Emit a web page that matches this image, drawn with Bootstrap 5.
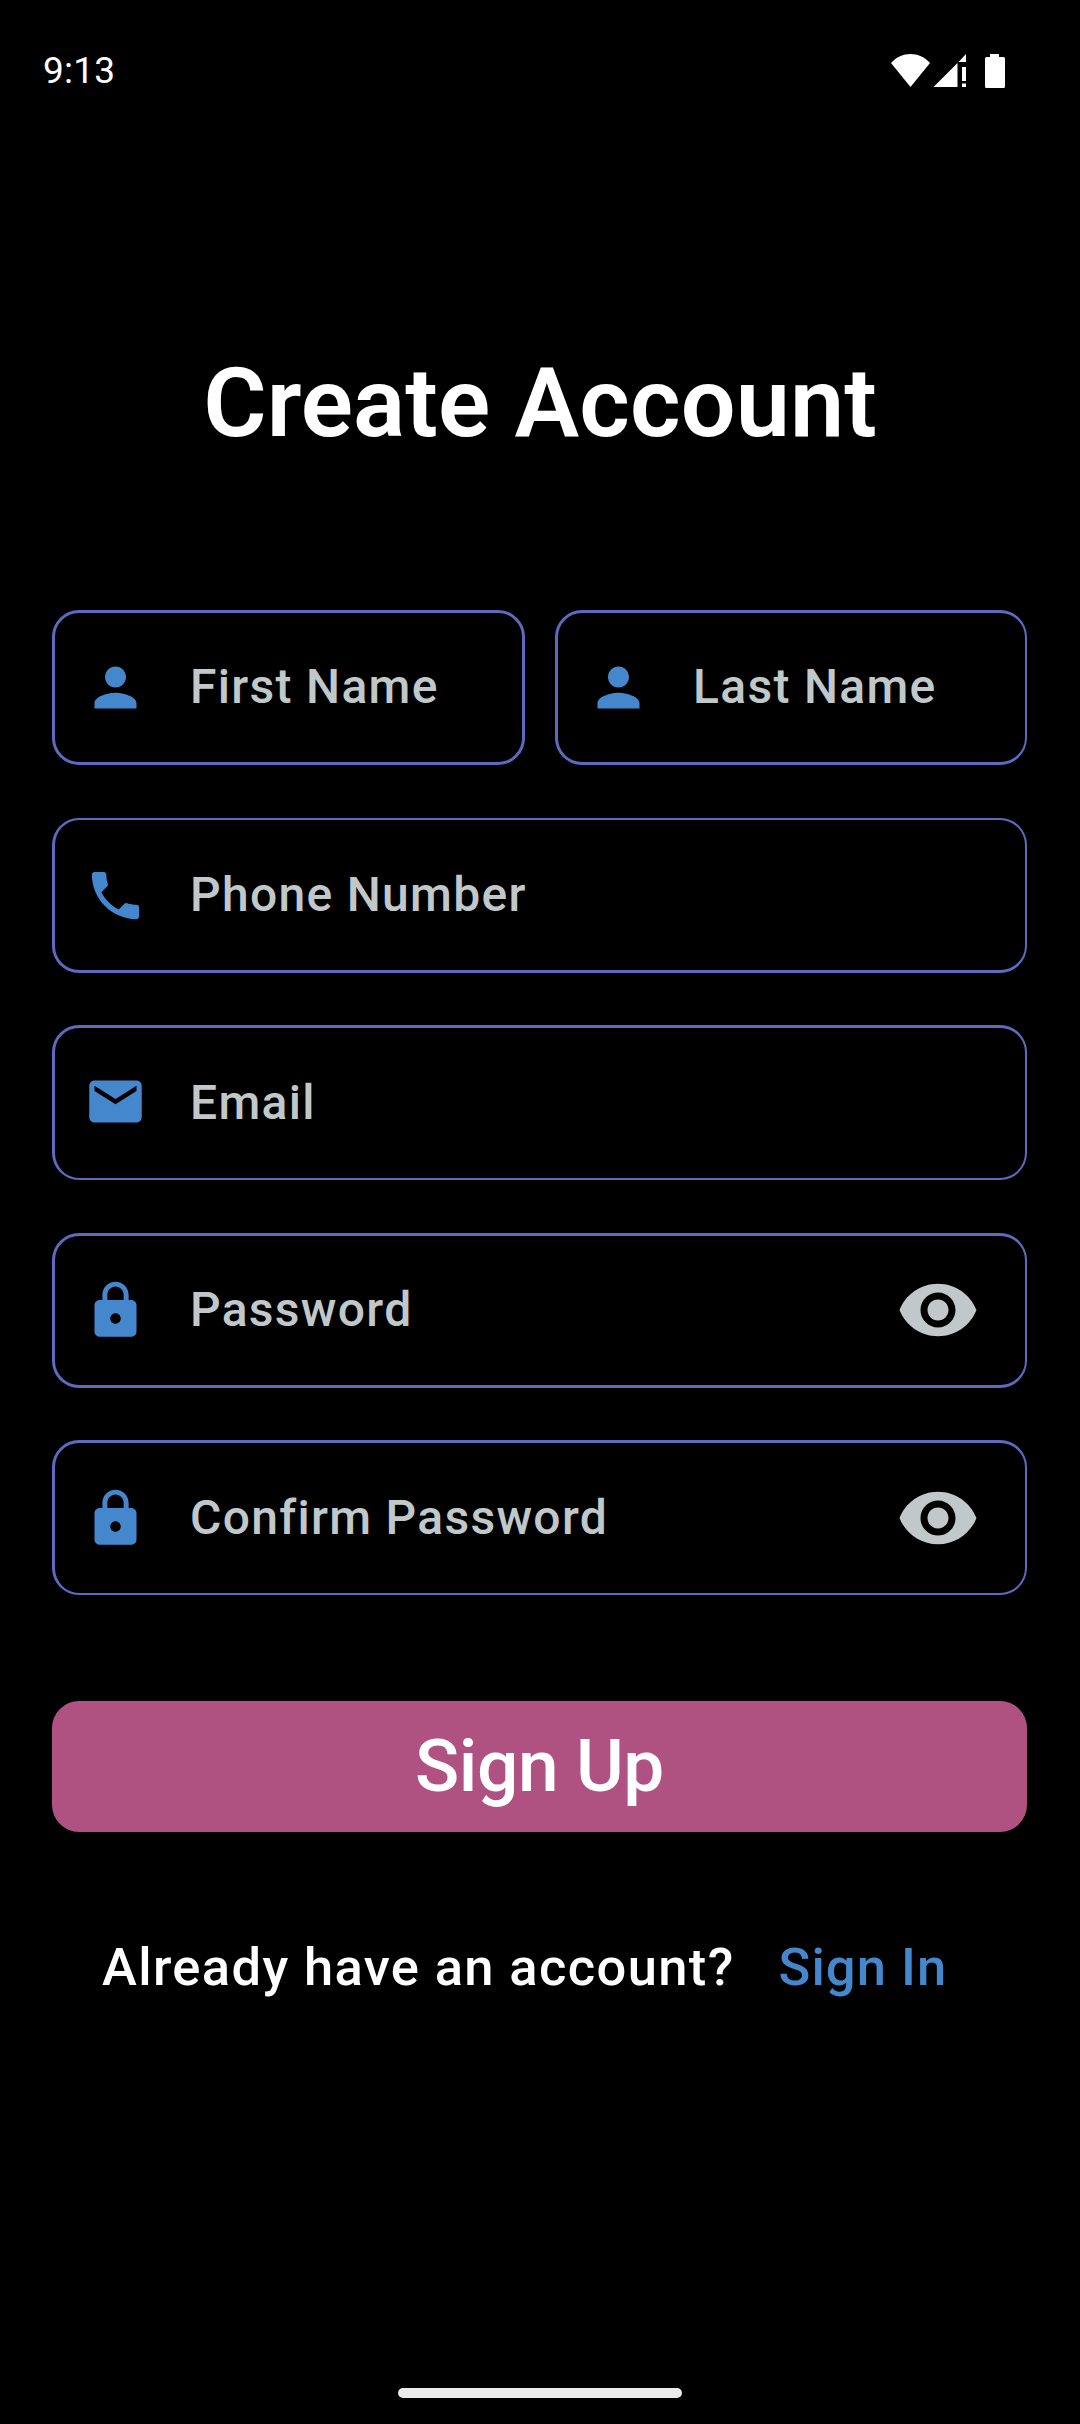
<!DOCTYPE html>
<html lang="en">
<head>
<meta charset="utf-8">
<meta name="viewport" content="width=device-width, initial-scale=1">
<title>Create Account</title>
<link href="https://cdn.jsdelivr.net/npm/bootstrap@5.3.0/dist/css/bootstrap.min.css" rel="stylesheet">
<style>
  body { background: #000; font-family: Roboto, "Liberation Sans", sans-serif; font-weight: 500; letter-spacing: 1.3px; }
  .screen { width: 1080px; height: 2424px; }
  .status-bar { height: 141px; padding: 0 75px 0 43px; font-size: 37px; font-weight: 400; letter-spacing: .2px; }
  .title-text { font-size: 97px; line-height: 110px; margin: 207px 0 152px; font-weight: 600; letter-spacing: .1px; }
  .form-area { padding: 0 53px 0 52px; }
  .stack { gap: 52px; }
  .name-row { gap: 30px; }
  .name-row, .gap-after { margin-bottom: 1px; }
  .raised span { padding-bottom: 2px; }
  .first-col { width: 473px; }
  .field { height: 155px; border: 3px solid #5c6bc0; border-radius: 27px; padding-left: 29px; color: #c0c8ca; font-size: 48px; line-height: 56px; }
  .field.wide { border-right-width: 2px; }
  .thin-top { border-top-width: 2px; }
  .thin-bottom { border-bottom-width: 2px; }
  .lead-icon { width: 63px; height: 63px; margin-right: 43px; fill: #4587cc; }
  .eye { width: 84px; height: 84px; margin-right: 45px; fill: #c0c8ca; }
  .raised .eye { margin-bottom: 1px; }
  .btn-signup, .btn-signup:hover { height: 131px; margin-top: 106px; padding: 0 0 1px; background: #af5282; color: #fff; border: 0; border-radius: 27px; font-size: 73px; font-weight: 500; line-height: 84px; letter-spacing: -.4px; }
  .signin-row { margin-top: 104px; padding-left: 102px; font-size: 52.5px; line-height: 62px; letter-spacing: 1.36px; }
  .signin-link { color: #4587cc; margin-left: 44px; letter-spacing: 1.05px; }
  .home-bar { width: 284px; height: 10px; margin-bottom: 26px; border-radius: 5px; background: #ebebeb; }
</style>
</head>
<body>
<svg class="d-none" xmlns="http://www.w3.org/2000/svg">
  <symbol id="person" viewBox="0 0 24 24"><path d="M12 12c2.21 0 4-1.79 4-4s-1.79-4-4-4-4 1.79-4 4 1.79 4 4 4zm0 2c-2.67 0-8 1.34-8 4v2h16v-2c0-2.66-5.33-4-8-4z"/></symbol>
  <symbol id="phone" viewBox="0 0 24 24"><path d="M6.62 10.79c1.44 2.83 3.76 5.14 6.59 6.59l2.2-2.2c.27-.27.67-.36 1.02-.24 1.12.37 2.33.57 3.57.57.55 0 1 .45 1 1V20c0 .55-.45 1-1 1-9.39 0-17-7.61-17-17 0-.55.45-1 1-1h3.5c.55 0 1 .45 1 1 0 1.25.2 2.45.57 3.57.11.35.03.74-.25 1.02l-2.2 2.2z"/></symbol>
  <symbol id="mail" viewBox="0 0 24 24"><path d="M20 4H4c-1.1 0-1.99.9-1.99 2L2 18c0 1.1.9 2 2 2h16c1.1 0 2-.9 2-2V6c0-1.1-.9-2-2-2zm0 4l-8 5-8-5V6l8 5 8-5v2z"/></symbol>
  <symbol id="lock" viewBox="0 0 24 24"><path d="M18 8h-1V6c0-2.76-2.24-5-5-5S7 3.24 7 6v2H6c-1.1 0-2 .9-2 2v10c0 1.1.9 2 2 2h12c1.1 0 2-.9 2-2V10c0-1.1-.9-2-2-2zm-6 9c-1.1 0-2-.9-2-2s.9-2 2-2 2 .9 2 2-.9 2-2 2zm3.1-9H8.9V6c0-1.71 1.39-3.1 3.1-3.1s3.1 1.39 3.1 3.1v2z"/></symbol>
  <symbol id="eye" viewBox="0 0 24 24"><path d="M12 4.5C7 4.5 2.73 7.61 1 12c1.73 4.39 6 7.5 11 7.5s9.27-3.11 11-7.5c-1.73-4.39-6-7.5-11-7.5zM12 17c-2.76 0-5-2.24-5-5s2.24-5 5-5 5 2.24 5 5-2.24 5-5 5zm0-8c-1.66 0-3 1.34-3 3s1.34 3 3 3 3-1.34 3-3-1.34-3-3-3z"/></symbol>
</svg>
<main class="screen d-flex flex-column text-white overflow-hidden">
  <header class="status-bar d-flex align-items-center justify-content-between">
    <span>9:13</span>
    <svg width="114" height="34" viewBox="0 0 114 34" fill="#fff">
      <path d="M0 9C10.5-3 28.5-3 39 9L19.500 33z"/>
      <path d="M42.5 33L66.5 9v24zM67.5 8L75 0v8zM71 13h4v14h-4zM71 29.500h4V33h-4z"/>
      <path d="M99 0h9v3h4.500a1.500 1.500 0 0 1 1.500 1.500v28a1.500 1.500 0 0 1-1.500 1.500h-17a1.500 1.500 0 0 1-1.500-1.500v-28A1.500 1.500 0 0 1 95.500 3H99z"/>
    </svg>
  </header>
  <h1 class="title-text text-center">Create Account</h1>
  <form class="form-area">
    <div class="stack d-flex flex-column">
      <div class="name-row raised d-flex">
        <div class="field first-col d-flex align-items-center"><svg class="lead-icon"><use href="#person"/></svg><span>First Name</span></div>
        <div class="field wide d-flex align-items-center flex-grow-1"><svg class="lead-icon"><use href="#person"/></svg><span>Last Name</span></div>
      </div>
      <div class="field wide thin-top d-flex align-items-center"><svg class="lead-icon"><use href="#phone"/></svg><span>Phone Number</span></div>
      <div class="field wide thin-bottom gap-after d-flex align-items-center"><svg class="lead-icon mb-1"><use href="#mail"/></svg><span>Email</span></div>
      <div class="field wide raised d-flex align-items-center"><svg class="lead-icon"><use href="#lock"/></svg><span>Password</span><svg class="eye ms-auto"><use href="#eye"/></svg></div>
      <div class="field wide thin-bottom d-flex align-items-center"><svg class="lead-icon"><use href="#lock"/></svg><span>Confirm Password</span><svg class="eye ms-auto"><use href="#eye"/></svg></div>
    </div>
    <button type="button" class="btn btn-signup w-100 d-flex align-items-center justify-content-center">Sign Up</button>
  </form>
  <div class="signin-row d-flex"><span>Already have an account?</span><span class="signin-link">Sign In</span></div>
  <div class="home-bar mx-auto mt-auto"></div>
</main>
<script src="https://cdn.jsdelivr.net/npm/bootstrap@5.3.0/dist/js/bootstrap.bundle.min.js"></script>
</body>
</html>
